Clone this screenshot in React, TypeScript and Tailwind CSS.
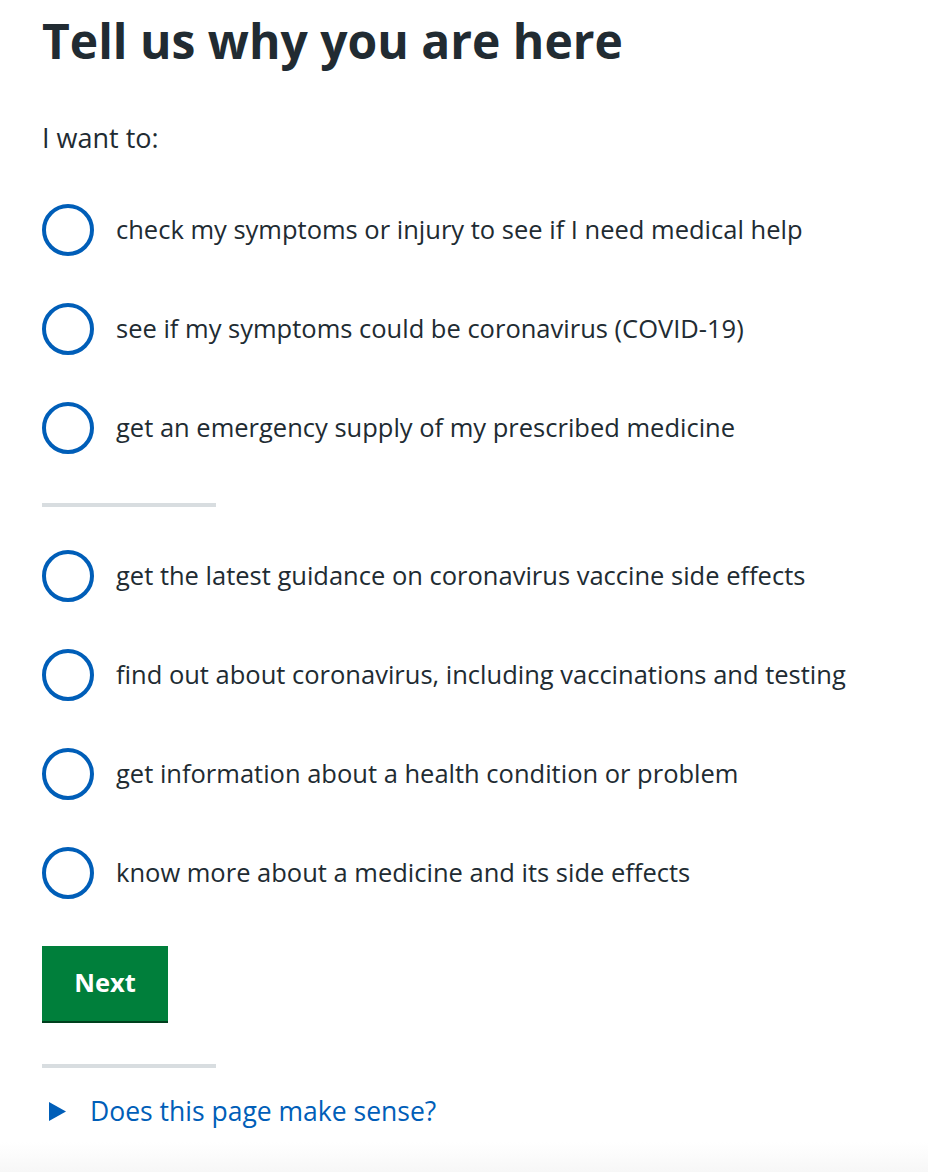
import React from "react";

const group1 = [
  "check my symptoms or injury to see if I need medical help",
  "see if my symptoms could be coronavirus (COVID-19)",
  "get an emergency supply of my prescribed medicine",
];
const group2 = [
  "get the latest guidance on coronavirus vaccine side effects",
  "find out about coronavirus, including vaccinations and testing",
  "get information about a health condition or problem",
  "know more about a medicine and its side effects",
];

function Radio({ label }: { label: string }) {
  return (
    <label className="flex items-center h-[52px]">
      <span className="w-[52px] h-[52px] shrink-0 rounded-full border-[4px] border-[#005eb8] bg-white" />
      <span className="ml-[22px] pb-[3px] text-[25.5px] leading-[32px] text-[#212b32]">{label}</span>
    </label>
  );
}

export default function App() {
  return (
    <div
      className="min-h-[1172px] bg-white flex flex-col"
      style={{ fontFamily: '"Open Sans", "Noto Sans", Arial, sans-serif' }}
    >
      <div className="pl-[42px] pt-[13px] flex-1">
        <h1 className="text-[48px] leading-[56px] font-bold text-[#212b32]">
          Tell us why you are here
        </h1>
        <p className="mt-[53px] text-[27px] leading-[32px] text-[#212b32]">I want to:</p>
        <div className="mt-[50px] flex flex-col gap-[47px]">
          {group1.map((l) => (
            <Radio key={l} label={l} />
          ))}
        </div>
        <div className="mt-[49px] w-[174px] h-[4px] bg-[#d8dde0]" />
        <div className="mt-[43px] flex flex-col gap-[47px]">
          {group2.map((l) => (
            <Radio key={l} label={l} />
          ))}
        </div>
        <button className="mt-[47px] w-[126px] h-[75px] pb-[2px] bg-[#007f3b] text-white text-[25.5px] font-bold shadow-[0_2px_0_#00401e]">
          Next
        </button>
        <div className="mt-[43px] w-[174px] h-[4px] bg-[#d8dde0]" />
        <div className="mt-[29px] flex items-center h-[28px]">
          <svg width="19" height="19" viewBox="0 0 19 19" className="ml-[7px]">
            <polygon points="0,0 17,9.5 0,19" fill="#005eb8" />
          </svg>
          <span className="ml-[22px] text-[26.5px] leading-[28px] text-[#005eb8]">
            Does this page make sense?
          </span>
        </div>
      </div>
      <div className="h-[30px] bg-gradient-to-b from-white to-[#f7f7f7]" />
    </div>
  );
}
